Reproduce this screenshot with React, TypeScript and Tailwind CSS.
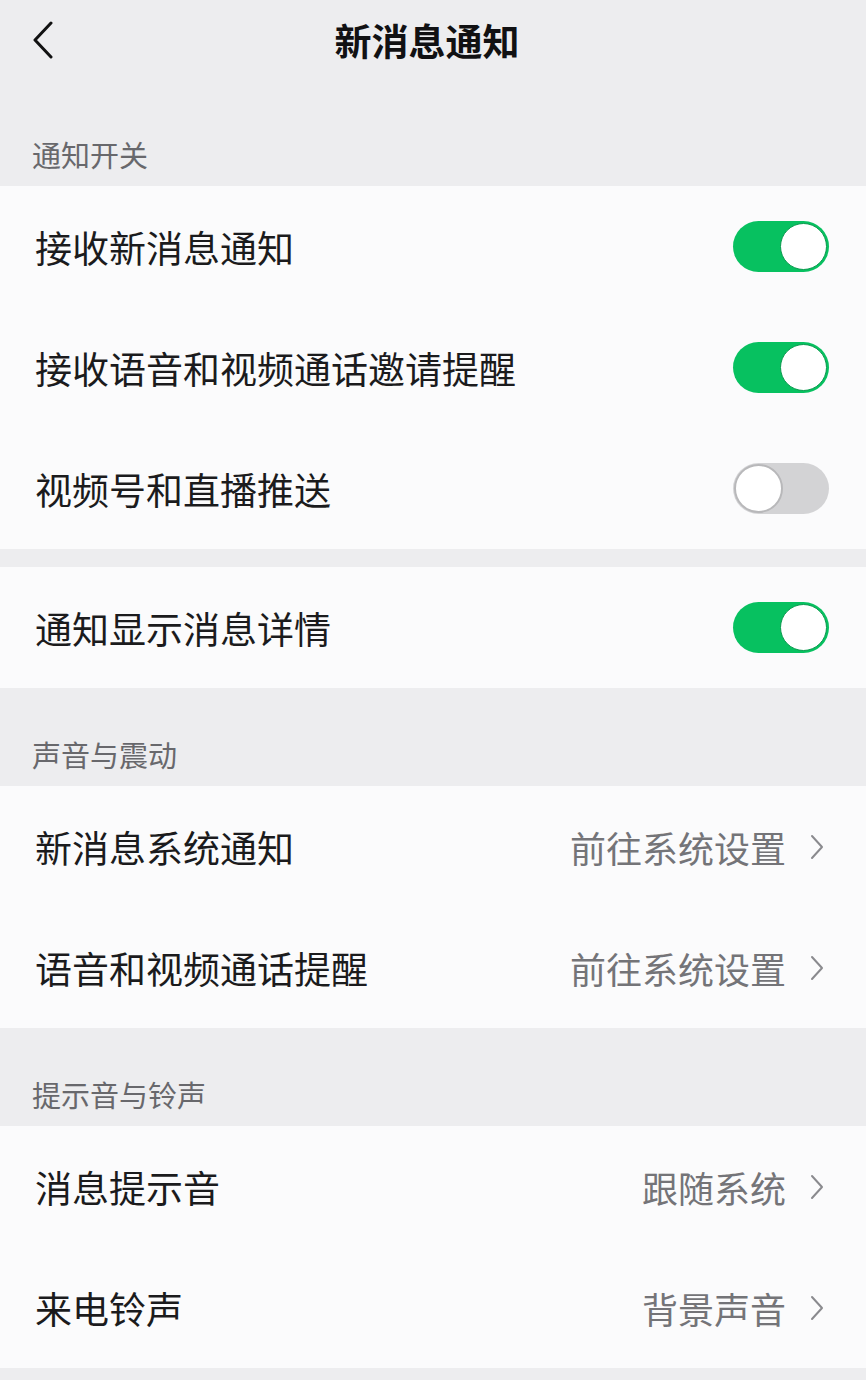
import React from "react";

const FONT = { fontFamily: '"Noto Sans CJK SC", "Noto Sans", sans-serif' };

function Toggle({ on }: { on: boolean }) {
  return on ? (
    <div className="w-[96px] h-[51px] rounded-full bg-[#07c160] flex items-center justify-end pr-[2px]">
      <div className="w-[47px] h-[47px] rounded-full bg-white border border-[#0a9a4e]" />
    </div>
  ) : (
    <div className="w-[96px] h-[51px] rounded-full bg-[#d3d3d5] flex items-center justify-start pl-[1px]">
      <div className="w-[49px] h-[49px] rounded-full bg-white border-2 border-[#b8b8ba]" />
    </div>
  );
}

function Chevron() {
  return (
    <svg width="14" height="26" viewBox="0 0 14 26" fill="none">
      <path d="M2 2 L12 13 L2 24" stroke="#8a8a8e" strokeWidth="2" strokeLinecap="round" strokeLinejoin="round" />
    </svg>
  );
}

function ToggleRow({ label, on }: { label: string; on: boolean }) {
  return (
    <div className="h-[121px] flex items-center justify-between pl-[35px] pr-[37px]">
      <span className="text-[37px] leading-[48px] text-[#1b1b1d]">{label}</span>
      <Toggle on={on} />
    </div>
  );
}

function LinkRow({ label, value }: { label: string; value: string }) {
  return (
    <div className="h-[121px] flex items-center justify-between pl-[35px] pr-[42px]">
      <span className="text-[37px] leading-[48px] text-[#1b1b1d]">{label}</span>
      <div className="flex items-center gap-[24px]">
        <span className="text-[36px] leading-[48px] text-[#747478]">{value}</span>
        <Chevron />
      </div>
    </div>
  );
}

function SectionLabel({ text }: { text: string }) {
  return (
    <div className="h-[98px] flex items-end pb-[12px] pl-[32px]">
      <span className="text-[29px] leading-[40px] text-[#68686c]">{text}</span>
    </div>
  );
}

export default function App() {
  return (
    <div className="w-[866px] h-[1380px] bg-[#ededef] overflow-hidden" style={FONT}>
      <div className="h-[88px] pb-[8px] grid grid-cols-[1fr_auto_1fr] items-center">
        <div className="pl-[32px] flex items-center">
          <svg width="22" height="38" viewBox="0 0 22 38" fill="none">
            <path d="M19 2 L3 19 L19 36" stroke="#111" strokeWidth="3" strokeLinecap="round" strokeLinejoin="round" />
          </svg>
        </div>
        <span className="text-[37px] leading-[48px] font-bold text-[#111113] mr-[12px]">新消息通知</span>
        <div />
      </div>

      <SectionLabel text="通知开关" />
      <div className="bg-[#fbfbfc]">
        <ToggleRow label="接收新消息通知" on={true} />
        <ToggleRow label="接收语音和视频通话邀请提醒" on={true} />
        <ToggleRow label="视频号和直播推送" on={false} />
      </div>
      <div className="h-[18px]" />
      <div className="bg-[#fbfbfc]">
        <ToggleRow label="通知显示消息详情" on={true} />
      </div>

      <SectionLabel text="声音与震动" />
      <div className="bg-[#fbfbfc]">
        <LinkRow label="新消息系统通知" value="前往系统设置" />
        <LinkRow label="语音和视频通话提醒" value="前往系统设置" />
      </div>

      <SectionLabel text="提示音与铃声" />
      <div className="bg-[#fbfbfc]">
        <LinkRow label="消息提示音" value="跟随系统" />
        <LinkRow label="来电铃声" value="背景声音" />
      </div>
    </div>
  );
}
